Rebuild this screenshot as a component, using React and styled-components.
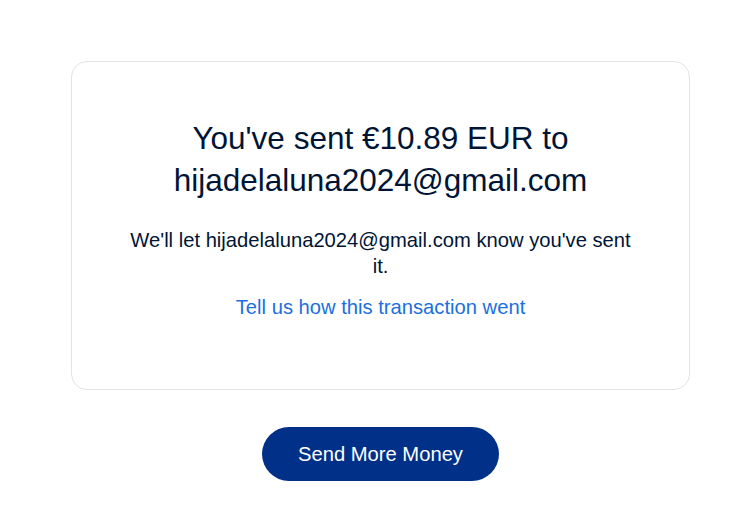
import React from 'react';
import styled, { createGlobalStyle } from 'styled-components';

const GlobalStyle = createGlobalStyle`
  body {
    margin: 0;
    background: #fff;
    font-family: 'Liberation Sans', Arial, sans-serif;
  }
`;

const Page = styled.div`
  display: flex;
  flex-direction: column;
  align-items: center;
  padding: 61px 39px 0 71px;
`;

const Card = styled.div`
  box-sizing: border-box;
  width: 619px;
  height: 329px;
  border: 1px solid #e3e3e3;
  border-radius: 16px;
  padding: 55px 50px 0;
  display: flex;
  flex-direction: column;
  align-items: center;
  text-align: center;
`;

const Title = styled.h1`
  margin: 0;
  font-size: 31.5px;
  font-weight: 400;
  line-height: 42px;
  color: #001435;
  max-width: 440px;
`;

const Message = styled.p`
  margin: 26px 0 0;
  max-width: 510px;
  font-size: 20.2px;
  line-height: 26px;
  color: #001435;
`;

const FeedbackLink = styled.a`
  margin-top: 15px;
  font-size: 20.2px;
  line-height: 26px;
  color: #1a6fdf;
  text-decoration: none;
`;

const PrimaryButton = styled.button`
  margin-top: 37px;
  width: 237px;
  height: 54px;
  border: none;
  border-radius: 27px;
  background: #003087;
  color: #fff;
  font-family: 'Liberation Sans', Arial, sans-serif;
  font-size: 20.2px;
  cursor: pointer;
`;

export default function App() {
  return (
    <>
      <GlobalStyle />
      <Page>
        <Card>
          <Title>You've sent €10.89 EUR to hijadelaluna2024@gmail.com</Title>
          <Message>We'll let hijadelaluna2024@gmail.com know you've sent it.</Message>
          <FeedbackLink href="#">Tell us how this transaction went</FeedbackLink>
        </Card>
        <PrimaryButton>Send More Money</PrimaryButton>
      </Page>
    </>
  );
}
